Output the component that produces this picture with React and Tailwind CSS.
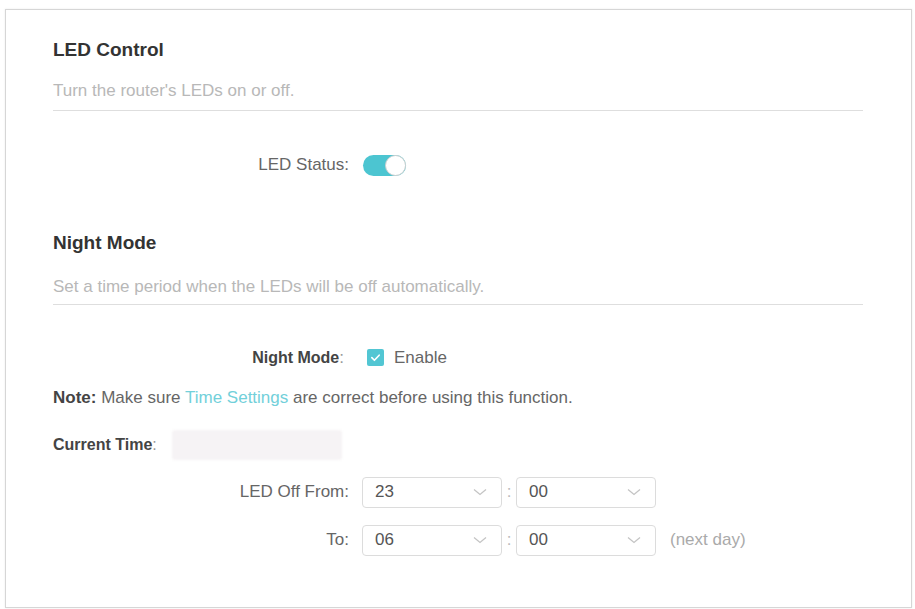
import React, { useState } from "react";

function Chevron() {
  return (
    <svg className="w-[14px] h-[8px]" viewBox="0 0 14 8" fill="none">
      <path d="M1 1.5l6 5 6-5" stroke="#c4c4c4" strokeWidth="1.3" />
    </svg>
  );
}

function Select({ value }) {
  return (
    <div className="w-[140px] h-[31px] border border-[#dcdcdc] rounded-[4px] flex items-center justify-between pl-[12px] pr-[14px] text-[17px] text-[#555]">
      <span>{value}</span>
      <Chevron />
    </div>
  );
}

function FieldRow({ label, bold, children, className = "" }) {
  return (
    <div className={`flex items-center ${className}`}>
      <div className="w-[296px] text-right text-[17px] text-[#666] leading-[20px]">
        {bold ? (
          <>
            <span className="font-bold text-[#444] text-[16px]">{label}</span>
            <span className="text-[#999]">:</span>
            <span className="inline-block w-[5px]" />
          </>
        ) : (
          `${label}:`
        )}
      </div>
      <div className="ml-[13px] flex items-center">{children}</div>
    </div>
  );
}

function TimeRow({ label, hour, minute, suffix, className = "" }) {
  return (
    <FieldRow label={label} className={className}>
      <Select value={hour} />
      <span className="w-[14px] text-center text-[#bbb] text-[17px]">:</span>
      <Select value={minute} />
      {suffix && (
        <span className="ml-[14px] text-[17px] text-[#aaa]">{suffix}</span>
      )}
    </FieldRow>
  );
}

export default function App() {
  const [ledOn, setLedOn] = useState(true);
  const [night, setNight] = useState(true);

  return (
    <div
      className="w-[915px] h-[609px] bg-white pt-[9px] pl-[5px] pr-[3px] pb-[1px]"
      style={{ fontFamily: '"Liberation Sans", Arial, sans-serif' }}
    >
      <div className="h-full border border-[#d6d6d6] shadow-[0_0_2px_rgba(0,0,0,0.08)] pl-[47px] pr-[48px] pt-[29px]">
        {/* LED Control */}
        <h2 className="text-[19px] leading-[22px] font-bold text-[#333]">
          LED Control
        </h2>
        <p className="mt-[20px] text-[17px] leading-[20px] text-[#b8b8b8]">
          Turn the router's LEDs on or off.
        </p>
        <div className="mt-[9px] h-px bg-[#dedede]" />

        <FieldRow label="LED Status" className="mt-[43px] h-[22px]">
          <button
            onClick={() => setLedOn(!ledOn)}
            className={`ml-[1px] w-[43px] h-[21px] rounded-full flex items-center ${
              ledOn ? "bg-[#4cc5d1] justify-end" : "bg-[#ccc] justify-start"
            }`}
          >
            <span className="w-[21px] h-[21px] rounded-full bg-white border border-[#cfcfcf]" />
          </button>
        </FieldRow>

        {/* Night Mode */}
        <h2 className="mt-[56px] text-[19px] leading-[22px] font-bold text-[#333]">
          Night Mode
        </h2>
        <p className="mt-[23px] text-[17px] leading-[20px] text-[#b8b8b8]">
          Set a time period when the LEDs will be off automatically.
        </p>
        <div className="mt-[7px] h-px bg-[#dedede]" />

        <FieldRow label="Night Mode" bold className="mt-[40px]">
          <button
            onClick={() => setNight(!night)}
            className="flex items-center gap-[10px] ml-[5px]"
          >
            <span
              className={`w-[17px] h-[17px] rounded-[2px] flex items-center justify-center ${
                night ? "bg-[#52c6d3]" : "bg-white border border-[#ccc]"
              }`}
            >
              {night && (
                <svg className="w-[11px] h-[11px]" viewBox="0 0 12 12" fill="none">
                  <path
                    d="M2 6.2l2.8 2.8L10 3.5"
                    stroke="white"
                    strokeWidth="1.8"
                    strokeLinecap="round"
                    strokeLinejoin="round"
                  />
                </svg>
              )}
            </span>
            <span className="text-[17px] text-[#666]">Enable</span>
          </button>
        </FieldRow>

        <p className="mt-[17px] text-[17px] leading-[20px] text-[#666]">
          <span className="font-bold text-[#444]">Note:</span> Make sure{" "}
          <span className="text-[#72d0da]">Time Settings</span> are correct
          before using this function.
        </p>

        <div className="mt-[22px] flex items-center h-[30px]">
          <span className="text-[16px] font-bold text-[#444]">Current Time</span>
          <span className="text-[16px] text-[#999]">:</span>
          <div className="ml-[15px] w-[170px] h-[30px] bg-[#f6f3f5] rounded-[3px] blur-[1px]" />
        </div>

        <TimeRow label="LED Off From" hour="23" minute="00" className="mt-[17px]" />
        <TimeRow
          label="To"
          hour="06"
          minute="00"
          suffix="(next day)"
          className="mt-[17px]"
        />
      </div>
    </div>
  );
}
